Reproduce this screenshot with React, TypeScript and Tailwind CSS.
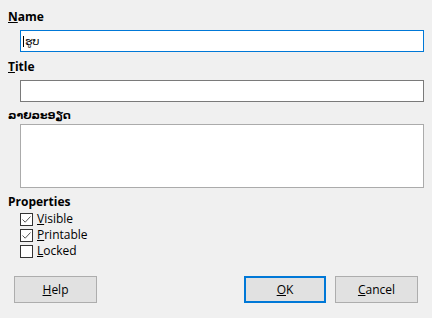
import React from 'react'

const font = { fontFamily: '"Open Sans", "DejaVu Sans", sans-serif' }

function Check({ checked, label, mn }: { checked: boolean; label: string; mn: number }) {
  return (
    <div className="flex h-4 items-center gap-[4px] pl-[20px]">
      <span className="flex h-[13px] w-[13px] items-center justify-center border border-[#333] bg-white">
        {checked && (
          <svg width="11" height="11" viewBox="0 0 11 11">
            <path d="M1.5 5.5 L4.2 8.2 L9.5 2.5" fill="none" stroke="#555" strokeWidth="1" />
          </svg>
        )}
      </span>
      <span className="text-[12px] leading-none text-black">
        <u>{label.slice(0, mn + 1)}</u>
        {label.slice(mn + 1)}
      </span>
    </div>
  )
}

export default function App() {
  return (
    <div className="h-[318px] w-[432px] bg-[#f0f0f0] text-black" style={font}>
      <div className="flex flex-col pt-[9px]">
        <div className="h-[21px] pl-[8px] text-[12px] font-bold leading-[15px]">
          <u>N</u>ame
        </div>
        <div className="ml-[20px] flex h-[22px] w-[404px] items-center border border-[#0078d7] bg-white pl-[2px]">
          <span className="border-l border-black pl-[1px] text-[11px] leading-none" style={{ fontFamily: '"DejaVu Sans", sans-serif' }}>
            ຮູບ
          </span>
        </div>
        <div className="mt-[7px] h-[21px] pl-[8px] text-[12px] font-bold leading-[15px]">
          <u>T</u>itle
        </div>
        <div className="ml-[20px] h-[22px] w-[404px] border border-[#7a7a7a] bg-white" />
        <div
          className="mt-[7px] h-[15px] pl-[8px] text-[11px] font-bold leading-[14px]"
          style={{ fontFamily: '"DejaVu Sans", sans-serif' }}
        >
          ລາຍລະອຽດ
        </div>
        <div className="ml-[20px] h-[64px] w-[404px] border border-[#ababab] bg-white" />
        <div className="mt-[6px] h-[17px] pl-[8px] text-[12px] font-bold leading-[15px]">Properties</div>
        <Check checked label="Visible" mn={0} />
        <Check checked label="Printable" mn={0} />
        <Check checked={false} label="Locked" mn={0} />
        <div className="mt-[17px] flex px-[14px]">
          <button className="h-[27px] w-[83px] border border-[#adadad] bg-[#e1e1e1] text-[12px]">
            <u>H</u>elp
          </button>
          <div className="flex-1" />
          <button className="h-[27px] w-[82px] border-2 border-[#0078d7] bg-[#e1e1e1] text-[12px]">
            <u>O</u>K
          </button>
          <button className="ml-[9px] h-[27px] w-[83px] border border-[#adadad] bg-[#e1e1e1] text-[12px]">
            <u>C</u>ancel
          </button>
        </div>
      </div>
    </div>
  )
}
